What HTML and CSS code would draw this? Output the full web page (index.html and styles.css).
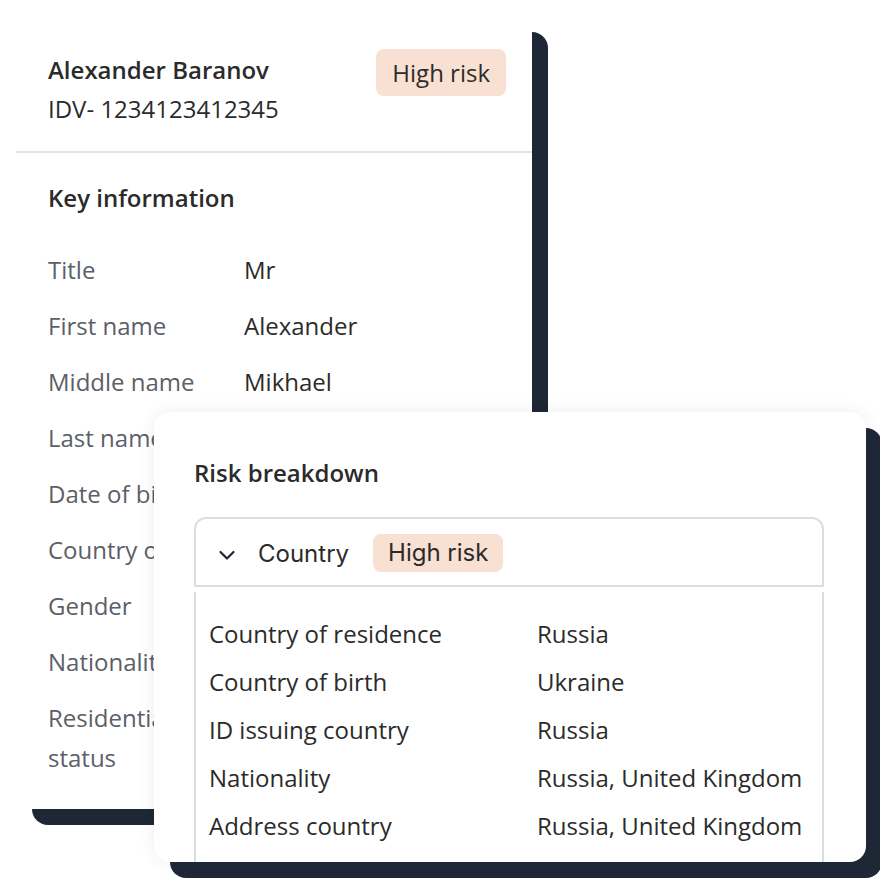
FILE: index.html
```html
<!DOCTYPE html>
<html lang="en">
<head>
  <meta charset="UTF-8">
  <meta name="viewport" content="width=device-width, initial-scale=1.0">
  <title>Risk breakdown</title>
  <link rel="stylesheet" href="styles.css">
</head>
<body>

  <div class="canvas">
    <!-- プロフィールカード -->
    <section class="profile-card">
      <div class="profile-head">
        <div class="profile-id">
          <h2>Alexander Baranov</h2>
          <p>IDV- 1234123412345</p>
        </div>
        <span class="badge">High risk</span>
      </div>

      <div class="key-info">
        <h3>Key information</h3>
        <dl class="info-list">
          <dt>Title</dt><dd>Mr</dd>
          <dt>First name</dt><dd>Alexander</dd>
          <dt>Middle name</dt><dd>Mikhael</dd>
          <dt>Last name</dt><dd>Baranov</dd>
          <dt>Date of birth</dt><dd>12/03/1984</dd>
          <dt>Country of birth</dt><dd>Ukraine</dd>
          <dt>Gender</dt><dd>Male</dd>
          <dt>Nationality</dt><dd>Russia</dd>
          <dt>Residential status</dt><dd>Resident</dd>
        </dl>
      </div>
    </section>

    <!-- リスク内訳（上に重なるカード） -->
    <section class="risk-card">
      <h3>Risk breakdown</h3>

      <div class="accordion">
        <div class="accordion-head">
          <svg class="chevron" width="18" height="12" viewBox="0 0 18 12">
            <polyline points="2.5,3 9,9.5 15.5,3" fill="none" stroke="#1d2735" stroke-width="2.2" stroke-linecap="round" stroke-linejoin="round"/>
          </svg>
          <span class="accordion-title">Country</span>
          <span class="badge badge-small">High risk</span>
        </div>

        <div class="accordion-body">
          <span>Country of residence</span><span>Russia</span>
          <span>Country of birth</span><span>Ukraine</span>
          <span>ID issuing country</span><span>Russia</span>
          <span>Nationality</span><span>Russia, United Kingdom</span>
          <span>Address country</span><span>Russia, United Kingdom</span>
        </div>
      </div>
    </section>
  </div>

</body>
</html>
```

FILE: styles.css
```css
html, body {
  margin: 0;
  padding: 0;
  overflow: hidden;
}

body {
  font-family: 'Open Sans', 'Noto Sans', sans-serif;
  background-color: #fff;
  color: #2b2b2b;
}

.canvas {
  position: relative;
  width: 880px;
  height: 880px;
  padding: 16px;
  box-sizing: border-box;
}

.profile-card {
  width: 516px;
  background-color: #fff;
  border-radius: 16px;
  box-shadow: 16px 16px 0 #1d2735;
}

.profile-head {
  display: flex;
  justify-content: space-between;
  align-items: flex-start;
  padding: 33px 26px 26px 32px;
  border-bottom: 2px solid #e1e4e8;
}

.profile-id {
  padding-top: 5px;
}

.profile-id h2 {
  margin: 0;
  font-size: 24px;
  font-weight: 600;
  line-height: 32px;
  color: #2b2b2b;
}

.profile-id p {
  margin: 7px 0 0;
  font-size: 24px;
  line-height: 32px;
  color: #2b2b2b;
}

.badge {
  display: inline-block;
  background-color: #f8e0d2;
  color: #2b2b2b;
  font-size: 24px;
  line-height: 31px;
  padding: 8px 16px;
  border-radius: 8px;
}

.badge-small {
  font-family: 'Inter', 'Open Sans', sans-serif;
  font-size: 24px;
  line-height: 32px;
  padding: 3px 15px;
}

.key-info {
  padding: 29px 26px 31px 32px;
}

.key-info h3 {
  margin: 0 0 36px;
  font-size: 24px;
  font-weight: 600;
  line-height: 32px;
}

.info-list {
  display: grid;
  grid-template-columns: 180px 1fr;
  column-gap: 16px;
  row-gap: 16px;
  margin: 0;
  font-size: 24px;
  line-height: 40px;
}

.info-list dt {
  color: #5b6068;
}

.info-list dd {
  margin: 0;
  color: #2b2b2b;
}

.risk-card {
  position: absolute;
  left: 154px;
  top: 412px;
  width: 712px;
  height: 450px;
  box-sizing: border-box;
  padding: 45px 42px 0 40px;
  background-color: #fff;
  border-radius: 16px;
  overflow: hidden;
  box-shadow: 16px 16px 0 #1d2735, 0 0 18px rgba(0, 0, 0, 0.07);
}

.risk-card h3 {
  margin: 0 0 28px;
  font-size: 24px;
  font-weight: 600;
  line-height: 32px;
}

.accordion-head {
  display: flex;
  align-items: center;
  height: 70px;
  box-sizing: border-box;
  padding: 2px 22px 0;
  border: 2px solid #dcdde3;
  border-radius: 12px 12px 0 0;
  font-family: 'Inter', 'Open Sans', sans-serif;
  font-size: 24px;
  color: #2b2b2b;
}

.chevron {
  margin-top: 3px;
}

.accordion-title {
  margin: 0 24px 0 22px;
}

.accordion-body {
  display: grid;
  grid-template-columns: 328px 1fr;
  margin-top: 5px;
  padding: 18px 13px 12px;
  border: 2px solid #dcdde3;
  border-top: none;
  font-size: 24px;
  line-height: 48px;
  color: #2b2b2b;
}
```
